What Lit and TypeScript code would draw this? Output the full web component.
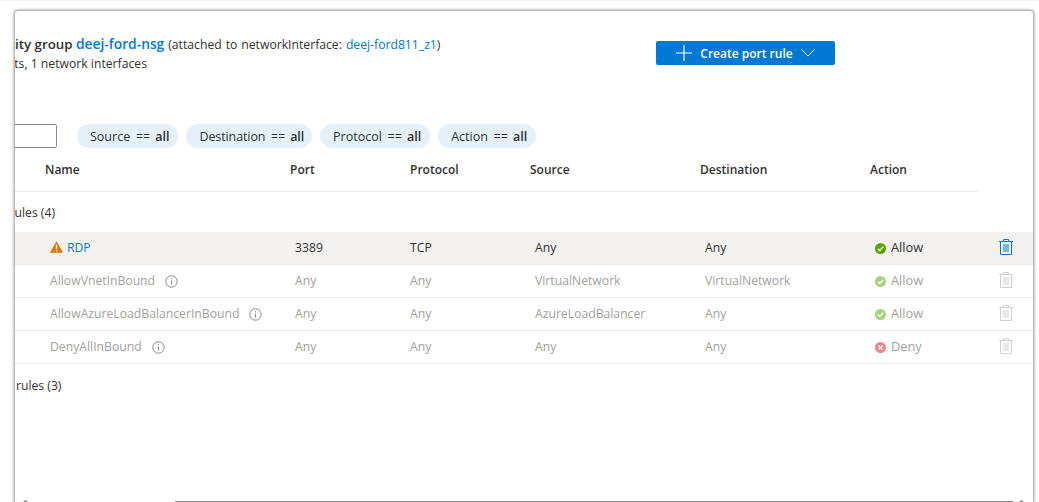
import { html, LitElement, css, svg } from "lit";
import { customElement } from "lit/decorators.js";

type Rule = {
  name: string;
  port: string;
  protocol: string;
  source: string;
  destination: string;
  action: "Allow" | "Deny";
  custom?: boolean;
};

const rules: Rule[] = [
  { name: "RDP", port: "3389", protocol: "TCP", source: "Any", destination: "Any", action: "Allow", custom: true },
  { name: "AllowVnetInBound", port: "Any", protocol: "Any", source: "VirtualNetwork", destination: "VirtualNetwork", action: "Allow" },
  { name: "AllowAzureLoadBalancerInBound", port: "Any", protocol: "Any", source: "AzureLoadBalancer", destination: "Any", action: "Allow" },
  { name: "DenyAllInBound", port: "Any", protocol: "Any", source: "Any", destination: "Any", action: "Deny" },
];

const filters = [
  ["Source", "all"],
  ["Destination", "all"],
  ["Protocol", "all"],
  ["Action", "all"],
];

const trashIcon = svg`<svg class="trash" width="14" height="16" viewBox="0 0 14 16" fill="none" stroke="currentColor" stroke-width="1">
  <path d="M0 2.5h14M4.5 2.5V.5h5v2M1.5 2.5v13h11v-13"/>
  <path d="M5 5v8M7 5v8M9 5v8"/>
</svg>`;

const infoIcon = svg`<svg class="info" width="13" height="13" viewBox="0 0 13 13" fill="none" stroke="#8a8886">
  <circle cx="6.5" cy="6.5" r="5.7"/>
  <path d="M6.5 5.5v4M6.5 3.2v1.1"/>
</svg>`;

const warnIcon = svg`<svg class="warn" width="13" height="12" viewBox="0 0 13 12">
  <path d="M6.5 0.2 13 11.8H0z" fill="#db7500"/>
  <path d="M5.8 3.8h1.4v4.2H5.8zM5.8 8.9h1.4v1.4H5.8z" fill="#fff"/>
</svg>`;

const allowIcon = svg`<svg width="11" height="11" viewBox="0 0 11 11">
  <circle cx="5.5" cy="5.5" r="5.5" fill="#57a300"/>
  <path d="M2.8 5.7 4.7 7.5 8.3 3.8" fill="none" stroke="#fff" stroke-width="1.4"/>
</svg>`;

const denyIcon = svg`<svg width="11" height="11" viewBox="0 0 11 11">
  <circle cx="5.5" cy="5.5" r="5.5" fill="#e00b1c"/>
  <path d="M3.4 3.4 7.6 7.6M7.6 3.4 3.4 7.6" fill="none" stroke="#fff" stroke-width="1.4"/>
</svg>`;

@customElement("app-root")
export class AppRoot extends LitElement {
  static styles = css`
    :host {
      display: block;
      height: 502px;
      overflow: hidden;
      background: #fff;
      border-top: 1px solid #f6f6f6;
      box-sizing: border-box;
      font-family: "Open Sans", "Liberation Sans", sans-serif;
      font-size: 12.2px;
      color: #323130;
    }

    .card {
      display: flex;
      flex-direction: column;
      height: 491px;
      margin: 10px 6px 0 15px;
      border-radius: 3px 3px 0 0;
      overflow: hidden;
      background: #fff;
      box-shadow: 0 0 3px 1px rgba(0, 0, 0, 0.45);
    }

    /* horizontally scrolled pane: its left part is cut off by the card */
    .pane {
      flex: 1;
      margin-left: -84px;
    }

    .top {
      display: grid;
      grid-template-columns: 725px 179px;
      padding-top: 23px;
      height: 89px;
      box-sizing: border-box;
    }

    .summary div {
      line-height: 19px;
      white-space: nowrap;
    }

    .summary .title {
      margin-left: -10px;
      word-spacing: 0.8px;
    }

    .summary .impact {
      margin-left: -10px;
    }

    b {
      font-weight: 600;
    }

    a {
      color: #0078d4;
      text-decoration: none;
    }

    .title b {
      font-size: 13.3px;
      word-spacing: 0;
    }

    .title b a {
      font-size: 13.8px;
    }

    .create {
      display: flex;
      align-items: center;
      justify-content: center;
      gap: 8px;
      height: 24px;
      margin-top: 7px;
      border-radius: 2px;
      background: #0078d4;
      color: #fff;
      font-size: 12px;
      font-weight: 600;
    }

    .filters {
      display: flex;
      gap: 8px;
      height: 24px;
      margin-top: 24px;
    }

    .search {
      width: 126px;
      margin-right: 12px;
      box-sizing: border-box;
      border: 1px solid #8a8886;
      border-radius: 2px;
    }

    .chip {
      display: flex;
      align-items: center;
      padding: 0 9px 0 13px;
      gap: 5px;
      border-radius: 12px;
      background: #e5f1fa;
      font-size: 12.5px;
      word-spacing: 2.5px;
    }

    .chip:nth-child(3) {
      padding-right: 8px;
      letter-spacing: -0.1px;
    }

    .grid {
      display: grid;
      align-items: center;
    }

    .head {
      grid-template-columns: 114px 245px 120px 120px 170px 170px 100px;
      width: 1047px;
      height: 43px;
      border-bottom: 1px solid #edebe9;
      font-size: 12px;
      font-weight: 600;
    }

    .group {
      height: 40px;
      padding-top: 1px;
      box-sizing: border-box;
      display: flex;
      align-items: center;
    }

    .group.last {
      height: 42px;
      margin-left: -4px;
    }

    .row {
      grid-template-columns: 119px 245px 115px 125px 170px 170px 123px 20px;
      height: 33px;
      padding-bottom: 2px;
      box-sizing: border-box;
      border-bottom: 1px solid #edebe9;
      color: #a19f9d;
    }

    .row.custom {
      background: #f3f2f1;
      color: #323130;
    }

    .name {
      display: flex;
      align-items: center;
    }

    .warn {
      margin-right: 4px;
    }

    .info {
      margin: 2px 0 0 10px;
    }

    .status {
      display: flex;
      align-items: center;
      gap: 5px;
      font-size: 12.8px;
    }

    .status svg {
      margin-top: 2px;
      opacity: 0.5;
    }

    .custom .status svg {
      opacity: 1;
    }

    .trash {
      display: block;
      margin: 0 0 1px 1px;
      color: #d2d0ce;
    }

    .custom .trash {
      color: #0078d4;
    }

    .scrollbar {
      display: flex;
      align-items: flex-end;
      height: 2px;
    }

    .thumb {
      height: 1px;
      width: 838px;
      margin: 0 -2px 0 147px;
      background: #8a8886;
    }

    .arrow {
      display: block;
      margin-left: 8px;
    }
  `;

  render() {
    const arrow = svg`<svg class="arrow" width="5" height="2" viewBox="0 0 5 2"><path d="M2.5 0 5 2H0z" fill="#8a8886"/></svg>`;
    return html`
      <div class="card">
        <div class="pane">
          <div class="top">
            <div class="summary">
              <div class="title">
                <b>Network security group <a>deej-ford-nsg</a></b>
                (attached to networkInterface: <a>deej-ford811_z1</a>)
              </div>
              <div class="impact">Impacts 0 subnets, 1 network interfaces</div>
            </div>
            <div class="create">
              <svg width="16" height="16" viewBox="0 0 16 16" stroke="#fff" stroke-width="1.2">
                <path d="M8 0v16M0 8h16" />
              </svg>
              <span>Create port rule</span>
              <svg width="14" height="8" viewBox="0 0 14 8" fill="none" stroke="#fff">
                <path d="M.5.5 7 7 13.5.5" />
              </svg>
            </div>
          </div>

          <div class="filters">
            <div class="search"></div>
            ${filters.map(
              ([label, value]) => html`<div class="chip"><span>${label} ==</span> <b>${value}</b></div>`
            )}
          </div>

          <div class="grid head">
            <span></span>
            <span>Name</span>
            <span>Port</span>
            <span>Protocol</span>
            <span>Source</span>
            <span>Destination</span>
            <span>Action</span>
          </div>

          <div class="group">Inbound port rules (${rules.length})</div>
          ${rules.map(
            (r) => html`
              <div class="grid row ${r.custom ? "custom" : ""}">
                <span></span>
                <div class="name">
                  ${r.custom ? html`${warnIcon}<a>${r.name}</a>` : html`<span>${r.name}</span>${infoIcon}`}
                </div>
                <span>${r.port}</span>
                <span>${r.protocol}</span>
                <span>${r.source}</span>
                <span>${r.destination}</span>
                <div class="status">${r.action === "Allow" ? allowIcon : denyIcon}<span>${r.action}</span></div>
                ${trashIcon}
              </div>
            `
          )}
          <div class="group last">Outbound port rules (3)</div>
        </div>
        <div class="scrollbar">${arrow}<div class="thumb"></div>${arrow}</div>
      </div>
    `;
  }
}
